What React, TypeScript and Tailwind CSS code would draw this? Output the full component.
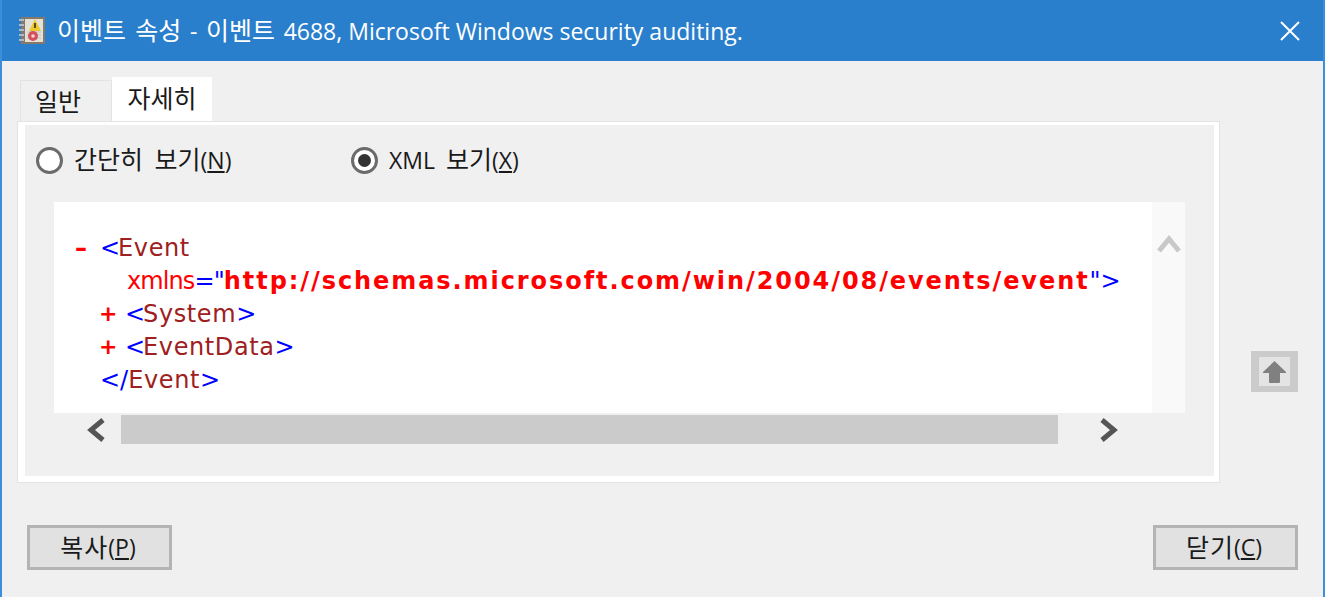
const ui = "font-['Open_Sans','Noto_Sans_CJK_KR',sans-serif]"

function EventIcon() {
    return (
        <svg width="28" height="29" viewBox="0 0 28 29" className="shrink-0">
            <rect x="3" y="1" width="24" height="27" fill="#86796a"/>
            <rect x="7" y="3" width="18" height="23" fill="#e6e1d6"/>
            <path d="M9 16 H23 M9 19 H23 M9 22 H23" stroke="#b9c4cc" strokeWidth="1"/>
            <rect x="1" y="3" width="5" height="2" fill="#aebbc6"/>
            <rect x="1" y="8" width="5" height="2" fill="#aebbc6"/>
            <rect x="1" y="13" width="5" height="2" fill="#aebbc6"/>
            <rect x="1" y="18" width="5" height="2" fill="#aebbc6"/>
            <rect x="1" y="23" width="5" height="2" fill="#aebbc6"/>
            <path d="M17 3 L23 15 H11 Z" fill="#ecc92c"/>
            <rect x="16" y="7" width="2" height="5" fill="#5a4a20"/>
            <circle cx="15" cy="20" r="5" fill="#d4505a"/>
            <circle cx="15" cy="20" r="1.8" fill="#f2d5d5"/>
        </svg>
    )
}

function Ko({children}: {children: React.ReactNode}) {
    return <span className="text-[25px]">{children}</span>
}

function Radio({checked, children, hotkey}: {checked?: boolean; children: React.ReactNode; hotkey: string}) {
    return (
        <div className="flex items-center gap-[11px]">
            <div className="w-[27px] h-[27px] rounded-full border-[3px] border-[#6b6b6b] bg-white flex items-center justify-center">
                {checked && <div className="w-[13px] h-[13px] rounded-full bg-[#333333]"/>}
            </div>
            <span className={`${ui} text-[23px] text-[#1a1a1a] [word-spacing:5px]`}>
                {children}(<span className="underline">{hotkey}</span>)
            </span>
        </div>
    )
}

function DialogButton({label, hotkey}: {label: string; hotkey: string}) {
    return (
        <button className={`${ui} w-[145px] h-[45px] pr-[3px] border-[3px] border-[#b4b4b4] bg-[#e1e1e1] text-[23px] text-[#1a1a1a] flex items-center justify-center`}>
            <span className="tracking-[1px]"><Ko>{label}</Ko></span>(<span className="underline">{hotkey}</span>)
        </button>
    )
}

function Name({children}: {children: React.ReactNode}) {
    return <span className="tracking-[0.6px]">{children}</span>
}

function Lt() {
    return <span className="text-[#0000ff] -mr-[2px]">&lt;</span>
}

function Gt() {
    return <span className="text-[#0000ff]">&gt;</span>
}

export default function App() {
    return (
        <div className="w-[1325px] h-[597px] bg-[#f0f0f0] border-x-2 border-[#3a8edb] flex flex-col overflow-hidden">
            <div className="h-[61px] -mx-[2px] bg-[#2a7fcc] flex items-center pl-[18px] pr-[24px] shrink-0">
                <EventIcon/>
                <div className={`${ui} ml-[11px] text-[23px] text-white whitespace-pre`}>
                    <span className="[word-spacing:2.7px]"><Ko>이벤트 속성</Ko> - <Ko>이벤트</Ko>{" "}</span>4688, Microsoft Windows security auditing.
                </div>
                <svg width="22" height="22" viewBox="0 0 22 22" className="ml-auto mt-[1px]" stroke="white" strokeWidth="2">
                    <path d="M2 2 L20 20 M20 2 L2 20"/>
                </svg>
            </div>

            <div className="flex pl-[16px] pt-[16px]">
                <div className="w-[1201px] shrink-0">
                    <div className={`${ui} flex items-end h-[45px] pl-[2px] text-[25px] text-[#1a1a1a]`}>
                        <div className="w-[92px] h-[42px] bg-[#f0f0f0] border border-b-0 border-[#e3e3e3] flex items-center pl-[14px]">일반</div>
                        <div className="w-[100px] h-[45px] bg-white flex items-center justify-center pb-[2px]">자세히</div>
                    </div>
                    <div className="h-[360px] border-solid border-t-[3px] border-l-[7px] border-r-[5px] border-b-[6px] border-white outline outline-1 outline-[#e3e3e3] bg-[#f0f0f0] pt-[17px]">
                        <div className="flex items-center h-[36px] pl-[11px]">
                            <div className="w-[315px]">
                                <Radio hotkey="N"><Ko>간단히 보기</Ko></Radio>
                            </div>
                            <Radio checked hotkey="X">XML <Ko>보기</Ko></Radio>
                        </div>
                        <div className="mt-[24px] ml-[29px] w-[1131px] h-[211px] bg-white flex">
                            <div className="flex-1 pt-[29px] pl-[21px] font-['DejaVu_Sans',sans-serif] text-[24px] text-[#9e2020] overflow-hidden">
                                <div className="flex h-[33px] items-center whitespace-pre">
                                    <span className="font-bold text-[#ff0000] w-[25px]">–</span>
                                    <Lt/><Name>Event</Name>
                                </div>
                                <div className="flex h-[33px] items-center whitespace-pre pl-[52px]">
                                    <span className="text-[#ff0000] tracking-[-0.9px]">xmlns</span>
                                    <span className="text-[#0000ff] tracking-[-0.9px]">="</span>
                                    <span className="text-[#ff0000] font-bold tracking-[1.93px]">http://schemas.microsoft.com/win/2004/08/events/event</span>
                                    <span className="text-[#0000ff]">"&gt;</span>
                                </div>
                                <div className="flex h-[33px] items-center whitespace-pre pl-[24px]">
                                    <span className="font-bold text-[#ff0000] text-[22px] w-[26px]">+</span>
                                    <Lt/><Name>System</Name><Gt/>
                                </div>
                                <div className="flex h-[33px] items-center whitespace-pre pl-[24px]">
                                    <span className="font-bold text-[#ff0000] text-[22px] w-[26px]">+</span>
                                    <Lt/><Name>EventData</Name><Gt/>
                                </div>
                                <div className="flex h-[33px] items-center whitespace-pre pl-[25px]">
                                    <span className="text-[#0000ff]">&lt;/</span><Name>Event</Name><Gt/>
                                </div>
                            </div>
                            <div className="w-[33px] bg-[#f9f9f9] pt-[31px] flex justify-center">
                                <svg width="24" height="20" viewBox="0 0 24 20" fill="none" stroke="#c8c8c8" strokeWidth="5">
                                    <path d="M2 18 L12 6 L22 18"/>
                                </svg>
                            </div>
                        </div>
                        <div className="flex items-center h-[29px] mt-[2px]">
                            <div className="w-[96px] flex justify-end pr-[15px]">
                                <svg width="20" height="24" viewBox="0 0 20 24" fill="none" stroke="#555555" strokeWidth="5">
                                    <path d="M17 2 L5 12 L17 22"/>
                                </svg>
                            </div>
                            <div className="w-[937px] h-[29px] bg-[#cbcbcb]"/>
                            <div className="pl-[41px]">
                                <svg width="20" height="24" viewBox="0 0 20 24" fill="none" stroke="#555555" strokeWidth="5">
                                    <path d="M3 2 L15 12 L3 22"/>
                                </svg>
                            </div>
                        </div>
                    </div>
                </div>
                <div className="pl-[32px] pt-[274px]">
                    <div className="w-[47px] h-[41px] bg-[#e4e4e4] border-y-[6px] border-x-[8px] border-[#cbcbcb] flex items-center justify-center">
                        <svg width="25" height="24" viewBox="0 0 25 24" fill="#808080">
                            <path d="M12.5 1 L24 12 V13 H18 V22 Q18 23 17 23 H8 Q7 23 7 22 V13 H1 V12 Z"/>
                        </svg>
                    </div>
                </div>
            </div>

            <div className="flex justify-between pl-[25px] pr-[25px] mt-[43px]">
                <DialogButton label="복사" hotkey="P"/>
                <DialogButton label="닫기" hotkey="C"/>
            </div>
        </div>
    )
}
